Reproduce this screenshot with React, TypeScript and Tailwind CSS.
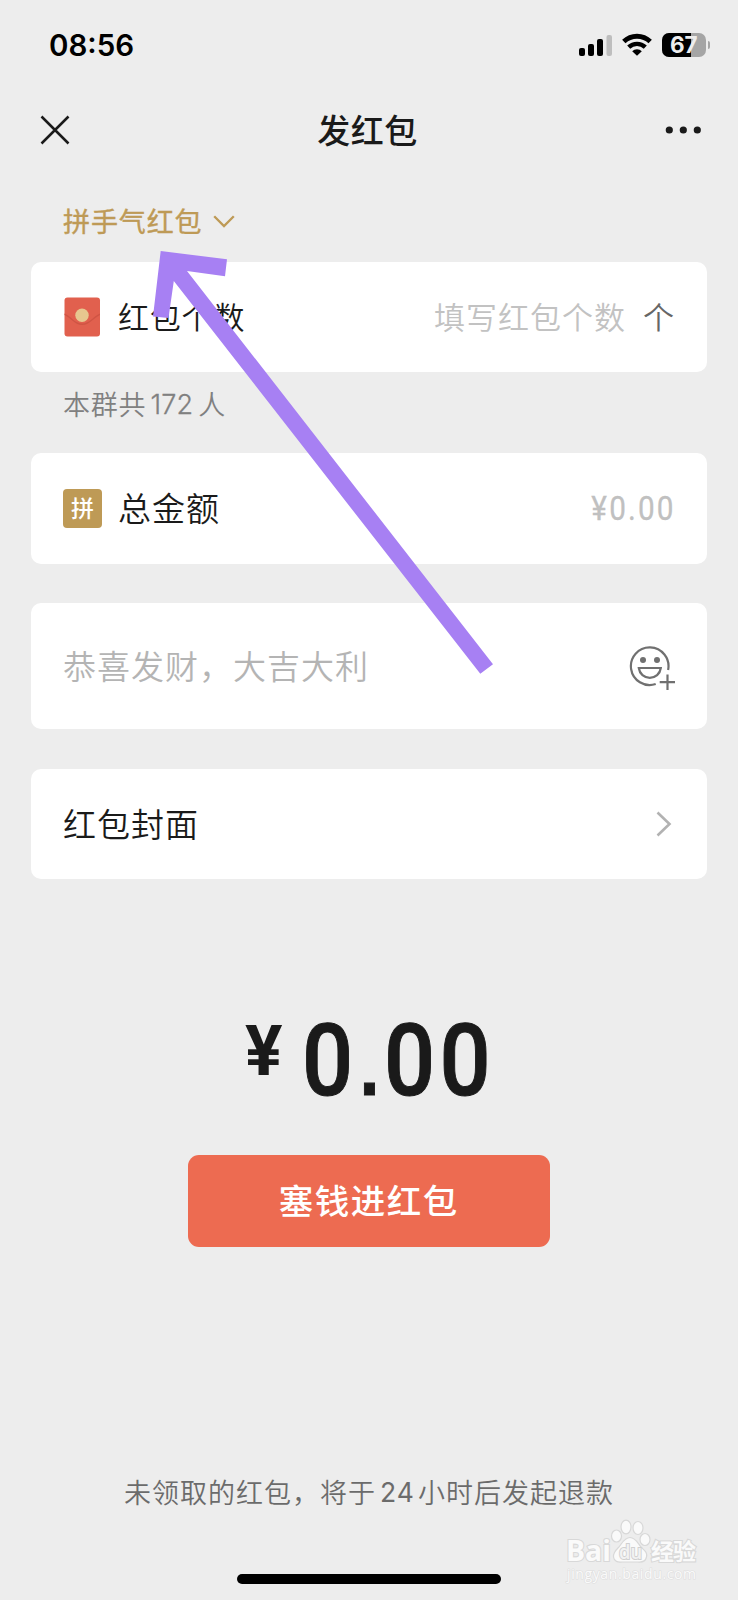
import type { ReactNode } from 'react'

function StatusBar() {
  return (
    <div className="flex h-[88px] items-start justify-between pl-[49px] pr-[28px]">
      <div className="mt-[27px] font-[Inter] text-[29.5px] font-semibold leading-[36px] text-black">
        08:56
      </div>
      <div className="mt-[33px] flex items-start">
        <svg width="34" height="24" viewBox="0 0 34 24" className="mr-[9px]">
          <rect x="0" y="15" width="6" height="8" rx="2" />
          <rect x="9" y="11" width="6" height="12" rx="2" />
          <rect x="18" y="6" width="6" height="17" rx="2" />
          <rect x="27.5" y="2" width="5.5" height="21" rx="2" fill="#bebebe" />
        </svg>
        <svg width="30" height="24" viewBox="0 0 30 24" className="mr-[10px]">
          <path d="M1.8 8.6a19 19 0 0 1 26.4 0" fill="none" stroke="#000" strokeWidth="4.8" />
          <path d="M6.7 14.200a12 12 0 0 1 16.6 0" fill="none" stroke="#000" strokeWidth="4.4" />
          <path d="M15 22.8l-4.8-4.6a6.6 6.6 0 0 1 9.6 0z" />
        </svg>
        <div className="relative flex h-[24px] w-[43.5px] items-center justify-center rounded-[7px] bg-[#a5a5a5]">
          <div className="absolute inset-y-0 left-0 w-[29px] rounded-l-[7px] bg-black" />
          <span className="relative font-[Inter] text-[22.5px] font-bold leading-[24px] text-[#ededed]">
            67
          </span>
        </div>
        <div className="ml-[2px] mt-[8px] h-[8px] w-[2.5px] rounded-r-full bg-[#a5a5a5]" />
      </div>
    </div>
  )
}

function NavBar() {
  return (
    <div className="flex h-[84px] items-center justify-between pl-[40px] pr-[36px]">
      <svg width="30" height="30" viewBox="0 0 30 30">
        <path d="M1.5 1.5l27 27M28.5 1.5l-27 27" stroke="#1a1a1a" strokeWidth="2.5" />
      </svg>
      <h1 className="pb-[2px] text-[33px] font-medium leading-[48px] tracking-[0.5px]">发红包</h1>
      <svg width="37" height="8" viewBox="0 0 37 8" fill="#1a1a1a">
        <circle cx="4.3" cy="4" r="3.6" />
        <circle cx="18.3" cy="4" r="3.6" />
        <circle cx="32.3" cy="4" r="3.6" />
      </svg>
    </div>
  )
}

function Card({ children, className }: { children: ReactNode; className: string }) {
  return (
    <div
      className={`flex items-center justify-between rounded-[10px] bg-white pl-[32px] pr-[32px] ${className}`}
    >
      {children}
    </div>
  )
}

function EnvelopeIcon() {
  return (
    <svg width="40" height="40" viewBox="0 0 40 40">
      <rect x="2.5" y="0.5" width="35.5" height="39" rx="3" fill="#e1604e" />
      <path
        d="M2.5 16.500c7 3 10.500 10 17.700 10s10.800-7 17.800-10v1.500c-7 3.500-10.600 10-17.800 10s-10.700-6.500-17.700-10z"
        fill="#d05444"
      />
      <circle cx="20" cy="18.3" r="6.7" fill="#e7c78f" />
    </svg>
  )
}

function EmojiIcon() {
  return (
    <svg
      width="46"
      height="46"
      viewBox="0 0 46 46"
      fill="none"
      stroke="#707070"
      strokeWidth="2.2"
      className="mt-[4px]"
    >
      <path d="M39.1 25a18.800 18.800 0 1 0-12.400 14" />
      <circle cx="14" cy="15" r="3" fill="#707070" stroke="none" />
      <circle cx="28" cy="15" r="3" fill="#707070" stroke="none" />
      <path d="M9.800 23h22c-.8 6-5.400 9.800-11 9.800s-10.200-3.800-11-9.800z" />
      <path d="M38.5 29.500v15.500M30.700 37.200h15.300" />
    </svg>
  )
}

function Watermark() {
  return (
    <svg
      width="140"
      height="70"
      viewBox="0 0 140 70"
      className="absolute left-[562px] top-[1517px]"
      fill="#fafafa"
      stroke="#d8d8d8"
      strokeWidth="1.2"
    >
      <g style={{ paintOrder: 'stroke' }} strokeWidth="2.2">
        <text x="4" y="44" fontFamily="Open Sans" fontSize="29" fontWeight="700" textLength="45" lengthAdjust="spacingAndGlyphs">
          Bai
        </text>
        <text x="89" y="43" fontFamily="Noto Sans CJK SC" fontSize="23" fontWeight="700" textLength="45">
          经验
        </text>
      </g>
      <ellipse cx="54.5" cy="19" rx="5" ry="6" />
      <ellipse cx="64" cy="10" rx="5" ry="6.8" />
      <ellipse cx="76" cy="11" rx="5" ry="6.5" />
      <ellipse cx="83" cy="22.5" rx="5" ry="6" />
      <path d="M68 20.500c6 0 8 6.500 11.500 10s6 5 5 9.500-5 5.500-9 5H60c-4 .500-8-.500-8.500-5s2-6.500 5-9.500 5.500-10 11.500-10z" />
      <text
        x="57"
        y="42"
        fontFamily="Open Sans"
        fontSize="20"
        fontWeight="600"
        fill="#f2f2f2"
        stroke="#d0d0d0"
        strokeWidth="2"
        style={{ paintOrder: 'stroke' }}
        textLength="23"
        lengthAdjust="spacingAndGlyphs"
      >
        du
      </text>
      <text
        x="5"
        y="62"
        fontFamily="Open Sans"
        fontSize="14"
        strokeWidth="1.2"
        stroke="#dedede"
        style={{ paintOrder: 'stroke' }}
        textLength="129"
      >
        jingyan.baidu.com
      </text>
    </svg>
  )
}

export default function App() {
  return (
    <div className="relative flex h-[1600px] w-[738px] flex-col overflow-hidden bg-[#ededed] font-['Noto_Sans_CJK_SC',sans-serif] text-[#1a1a1a]">
      <StatusBar />
      <NavBar />

      <div className="flex h-[90px] items-center pl-[63px] pt-[9px] text-[#be9a56]">
        <span className="pb-px text-[27px] leading-[40px] tracking-[0.9px] [-webkit-text-stroke:0.4px]">拼手气红包</span>
        <svg width="22" height="13" viewBox="0 0 22 13" className="ml-[10px]">
          <path d="M1.2 1.2l9.8 9.8 9.8-9.8" fill="none" stroke="#be9a56" strokeWidth="2.3" />
        </svg>
      </div>

      <main className="flex flex-col px-[31px]">
        <Card className="h-[110px]">
          <div className="-ml-px flex items-center">
            <EnvelopeIcon />
            <span className="ml-[16px] pb-[2px] text-[31px] font-[350] leading-[46px] tracking-[0.8px]">红包个数</span>
          </div>
          <div className="flex items-center pb-[2px] text-[31px] font-[350] leading-[46px] tracking-[1px]">
            <span className="text-[#c2c2c2]">填写红包个数</span>
            <span className="ml-[17px] text-[#666]">个</span>
          </div>
        </Card>

        <div className="flex h-[81px] items-start pl-[32px] pt-[12px] text-[27px] font-[350] leading-[40px] tracking-[0.8px] text-[#808080]">
          本群共
          <span className="ml-[4px] mr-[5px] pt-px font-[Inter] text-[27px] font-light tracking-[0.2px] [-webkit-text-stroke:0.3px]">
            172
          </span>
          人
        </div>

        <Card className="h-[110.5px]">
          <div className="flex items-center">
            <div className="flex h-[39px] w-[39px] items-center justify-center rounded-[4px] bg-[#be9a56] pb-[2px] text-[23px] font-medium leading-[37px] text-white">
              拼
            </div>
            <span className="ml-[16px] pb-[2px] text-[33px] font-[350] leading-[46px] tracking-[1px]">总金额</span>
          </div>
          <span className="-mr-px origin-right scale-x-90 pt-[2px] font-[Roboto] text-[33px] leading-[46px] tracking-[2.4px] text-[#c0c0c0] [-webkit-text-stroke:0.3px]">
            ¥0.00
          </span>
        </Card>

        <Card className="mt-[39.5px] h-[126px]">
          <span className="pb-[2px] text-[33px] font-[350] leading-[46px] tracking-[1px] text-[#b4b4b4]">
            恭喜发财，大吉大利
          </span>
          <EmojiIcon />
        </Card>

        <Card className="mt-[39.5px] h-[110.5px]">
          <span className="pb-[2px] text-[33px] font-[350] leading-[46px] tracking-[1px]">红包封面</span>
          <svg width="16" height="26" viewBox="0 0 16 26" className="mr-[3px]">
            <path d="M1.5 1.500l12 11.500-12 11.500" fill="none" stroke="#b2b2b2" strokeWidth="2.6" />
          </svg>
        </Card>
      </main>

      <div className="mt-[117.5px] flex h-[128px] items-start pl-[245px] font-[Roboto] font-medium">
        <span className="mt-[14.5px] w-[56.5px] text-[70px] font-bold leading-[80px]">¥</span>
        <span className="origin-left scale-x-90 whitespace-nowrap text-[100px] leading-[128px] tracking-[5px] [-webkit-text-stroke:1px]">
          0<span className="pl-[2px] font-['Liberation_Sans'] text-[80px] font-bold leading-none">.</span>00
        </span>
      </div>

      <button className="ml-[187.5px] mt-[30px] h-[92.5px] w-[362.5px] rounded-[11px] bg-[#ed6b51] pb-[3px] text-[34.5px] font-medium leading-[50px] tracking-[1.5px] text-white">
        塞钱进红包
      </button>

      <div className="mt-[224.5px] flex h-[40px] justify-center text-[27px] font-[350] leading-[40px] tracking-[1px] text-[#6b6b6b]">
        未领取的红包，将于
        <span className="ml-[4px] mr-[3px] font-[Inter] text-[26.5px] font-normal">24</span>
        小时后发起退款
      </div>

      <div className="ml-[237px] mt-[62px] h-[10px] w-[264px] rounded-full bg-black" />

      <Watermark />

      <svg width="738" height="1600" viewBox="0 0 738 1600" className="pointer-events-none absolute left-0 top-0">
        <path
          d="M160.700 251l66.300 8.300-2 17-38-5.300 306 393.300-12.700 9.500L173.800 281l-5.300 37-15.500-1.500z"
          fill="#a780f3"
        />
      </svg>
    </div>
  )
}
